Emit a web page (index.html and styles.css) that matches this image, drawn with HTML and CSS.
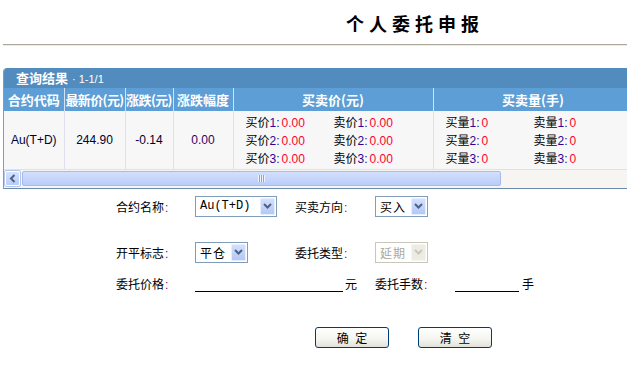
FILE: index.html
```html
<!DOCTYPE html>
<html lang="zh-CN">

<head>
  <meta charset="UTF-8">
  <title>个人委托申报</title>
  <link rel="stylesheet" href="styles.css">
</head>

<body>
  <h1 class="title">个人委托申报</h1>
  <div class="rule"></div>

  <!-- 行情查询结果 -->
  <div class="result">
    <div class="result-head">查询结果 <span class="pager">· 1-1/1</span></div>
    <div class="grid-wrap">
      <table class="quote">
        <colgroup>
          <col class="c-code">
          <col class="c-last">
          <col class="c-chg">
          <col class="c-pct">
          <col class="c-price">
          <col class="c-vol">
        </colgroup>
        <tr>
          <th>合约代码</th>
          <th class="tight">最新价(元)</th>
          <th class="tight">涨跌(元)</th>
          <th>涨跌幅度</th>
          <th>买卖价(元)</th>
          <th>买卖量(手)</th>
        </tr>
        <tr>
          <td>Au(T+D)</td>
          <td>244.90</td>
          <td>-0.14</td>
          <td class="pct">0.00</td>
          <td class="depth">
            <div class="depth-grid">
              <span>买价<i>1:</i><b>0.00</b></span><span>卖价<i>1:</i><b>0.00</b></span>
              <span>买价<i>2:</i><b>0.00</b></span><span>卖价<i>2:</i><b>0.00</b></span>
              <span>买价<i>3:</i><b>0.00</b></span><span>卖价<i>3:</i><b>0.00</b></span>
            </div>
          </td>
          <td class="depth">
            <div class="depth-grid">
              <span>买量<i>1:</i><b>0</b></span><span>卖量<i>1:</i><b>0</b></span>
              <span>买量<i>2:</i><b>0</b></span><span>卖量<i>2:</i><b>0</b></span>
              <span>买量<i>3:</i><b>0</b></span><span>卖量<i>3:</i><b>0</b></span>
            </div>
          </td>
        </tr>
      </table>
    </div>
    <div class="hscroll">
      <div class="sb-btn">
        <svg width="7" height="9" viewBox="0 0 7 9"><polyline points="5.5,1 2,4.5 5.5,8" fill="none" stroke="#4d6185" stroke-width="2"/></svg>
      </div>
      <div class="sb-thumb"><span class="grip"></span></div>
    </div>
  </div>

  <!-- 委托表单 -->
  <form class="order-form">
    <div class="form-row row-1">
      <span class="label">合约名称<span class="colon">:</span></span>
      <span class="field">
        <span class="select sel-code"><span class="select-text mono">Au(T+D)</span><span class="select-btn"><svg width="9" height="6" viewBox="0 0 9 6"><polyline points="1,1 4.5,4.5 8,1" fill="none" stroke="#4d6185" stroke-width="2"/></svg></span></span>
      </span>
      <span class="label label-wide">买卖方向<span class="colon">:</span></span>
      <span class="select sel-short"><span class="select-text">买入</span><span class="select-btn"><svg width="9" height="6" viewBox="0 0 9 6"><polyline points="1,1 4.5,4.5 8,1" fill="none" stroke="#4d6185" stroke-width="2"/></svg></span></span>
    </div>

    <div class="form-row row-2">
      <span class="label">开平标志<span class="colon">:</span></span>
      <span class="field">
        <span class="select sel-short"><span class="select-text">平仓</span><span class="select-btn"><svg width="9" height="6" viewBox="0 0 9 6"><polyline points="1,1 4.5,4.5 8,1" fill="none" stroke="#4d6185" stroke-width="2"/></svg></span></span>
      </span>
      <span class="label label-wide">委托类型<span class="colon">:</span></span>
      <span class="select sel-short disabled"><span class="select-text">延期</span><span class="select-btn"><svg width="9" height="6" viewBox="0 0 9 6"><polyline points="1,1 4.5,4.5 8,1" fill="none" stroke="#c9c7ba" stroke-width="2"/></svg></span></span>
    </div>

    <div class="form-row row-3">
      <span class="label">委托价格<span class="colon">:</span></span>
      <span class="field field-price">
        <input class="line-input price-input" type="text">
        <span class="unit">元</span>
      </span>
      <span class="label label-wide">委托手数<span class="colon">:</span></span>
      <input class="line-input qty-input" type="text">
      <span class="unit unit-hand">手</span>
    </div>

    <div class="actions">
      <button type="button" class="btn">确 定</button>
      <button type="button" class="btn">清 空</button>
    </div>
  </form>
</body>

</html>
```

FILE: styles.css
```css
* {
  margin: 0;
  padding: 0;
  box-sizing: border-box;
}

body {
  font: 12px "Noto Sans CJK SC", "Liberation Sans", sans-serif;
  color: #000;
  background: #fff;
}

.title {
  height: 44px;
  padding: 12px 0 0 346px;
  font-size: 18px;
  line-height: 22px;
  font-weight: 700;
  letter-spacing: 5px;
}

.rule {
  margin-left: 3px;
  height: 2px;
  border-top: 1px solid #aca899;
  border-bottom: 1px solid #ecebe4;
}

/* result box */
.result {
  margin: 22px 0 0 3px;
  border-left: 1px solid #7f9db9;
  border-bottom: 1px solid #6a8bb0;
  border-radius: 4px 0 0 0;
  overflow: hidden;
}

.result-head {
  height: 20px;
  padding-left: 12px;
  background: #528bbd;
  color: #fff;
  font-size: 13px;
  font-weight: 700;
  line-height: 20px;
}

.pager {
  font: 11px "Liberation Sans", sans-serif;
  margin-left: 1px;
}

.grid-wrap {
  overflow: hidden;
}

.quote {
  width: 629px;
  table-layout: fixed;
  border-collapse: collapse;
}

.c-code { width: 60px; }
.c-last { width: 61px; }
.c-chg { width: 48px; }
.c-pct { width: 60px; }
.c-price { width: 200px; }
.c-vol { width: 200px; }

.quote th {
  height: 23px;
  padding: 0;
  background: #5c9ed5;
  color: #fff;
  font-size: 13px;
  font-weight: 700;
  white-space: nowrap;
  overflow: visible;
  border-right: 1px solid #d6e2f4;
}

.quote th.tight {
  letter-spacing: -0.6px;
}

.quote td {
  height: 58px;
  padding: 0;
  background: #f7f7f7;
  text-align: center;
  color: #000033;
  font: 12px "Liberation Sans", sans-serif;
  border-right: 1px solid #e0dff0;
  border-bottom: 1px solid #e0dff0;
}

.quote td.pct {
  color: #330066;
}

.quote td.depth {
  text-align: left;
  padding-left: 12px;
  font-family: "Noto Sans CJK SC", sans-serif;
  color: #000;
}

.depth-grid {
  display: grid;
  grid-template-columns: 88px 88px;
  line-height: 18px;
}

.depth-grid i {
  font: 12px "Liberation Sans", sans-serif;
  color: #330099;
}

.depth-grid b {
  margin-left: 2px;
  font: 12px "Liberation Sans", sans-serif;
  color: #ff0033;
}

/* fake horizontal scrollbar */
.hscroll {
  display: flex;
  align-items: center;
  gap: 2px;
  height: 18px;
  padding-left: 1px;
  background: #f6f5f1;
}

.sb-btn {
  width: 15px;
  height: 15px;
  display: flex;
  align-items: center;
  justify-content: center;
  border: 1px solid #fff;
  border-radius: 2px;
  background: linear-gradient(#d6e2fd, #b9cdf7);
  box-shadow: 0 0 0 1px #b4c6ee;
}

.sb-thumb {
  width: 479px;
  height: 15px;
  display: flex;
  align-items: center;
  justify-content: center;
  border: 1px solid #a6bbec;
  border-radius: 2px;
  background: linear-gradient(#d2dffd, #bacdf8);
}

.grip {
  width: 7px;
  height: 7px;
  background: repeating-linear-gradient(90deg, #eef3ff 0 1px, #8aa3dc 1px 2px);
}

/* order form */
.order-form {
  padding-left: 116px;
}

.form-row {
  display: flex;
  align-items: center;
  height: 21px;
}

.row-1 { margin-top: 7px; }
.row-2 { margin-top: 25px; }
.row-3 { margin-top: 10px; }

.label {
  width: 79px;
  white-space: nowrap;
}

.label-wide {
  width: 80px;
}

.colon {
  font-family: "Liberation Sans", sans-serif;
  color: #800080;
  margin-left: 1px;
}

.field {
  width: 100px;
  display: flex;
  align-items: center;
}

.field-price {
  width: 180px;
  align-self: stretch;
}

.select {
  display: flex;
  align-items: center;
  height: 21px;
  padding: 1px;
  border: 1px solid #7f9db9;
  background: #fff;
}

.sel-code { width: 82px; }
.sel-short { width: 53px; }

.select-text {
  flex: 1;
  padding-left: 3px;
  font-size: 12px;
  letter-spacing: 1px;
  white-space: nowrap;
}

.mono {
  font-family: "Liberation Mono", monospace;
  letter-spacing: 0;
}

.select-btn {
  width: 15px;
  height: 17px;
  display: flex;
  align-items: center;
  justify-content: center;
  border: 1px solid #e6eeff;
  border-radius: 1px;
  background: linear-gradient(#d3e0fd, #b4c8f6);
}

.disabled {
  border-color: #c9c7ba;
}

.disabled .select-text {
  color: #aca899;
}

.disabled .select-btn {
  border-color: #f6f5f0;
  background: #edece4;
}

.line-input {
  height: 19px;
  align-self: flex-start;
  border: none;
  border-bottom: 1px solid #000;
  outline: none;
  background: transparent;
}

.price-input { width: 148px; }
.qty-input { width: 64px; }

.unit {
  margin-left: 2px;
}

.unit-hand {
  margin-left: 3px;
}

.actions {
  display: flex;
  gap: 29px;
  margin-top: 33px;
  padding-left: 199px;
}

.btn {
  width: 74px;
  height: 21px;
  border: 1px solid #003c74;
  border-radius: 3px;
  background: linear-gradient(#fff, #f4f4f0 60%, #e2e1d9);
  font: 12px "Noto Sans CJK SC", sans-serif;
  word-spacing: 4px;
  color: #000;
}
```
